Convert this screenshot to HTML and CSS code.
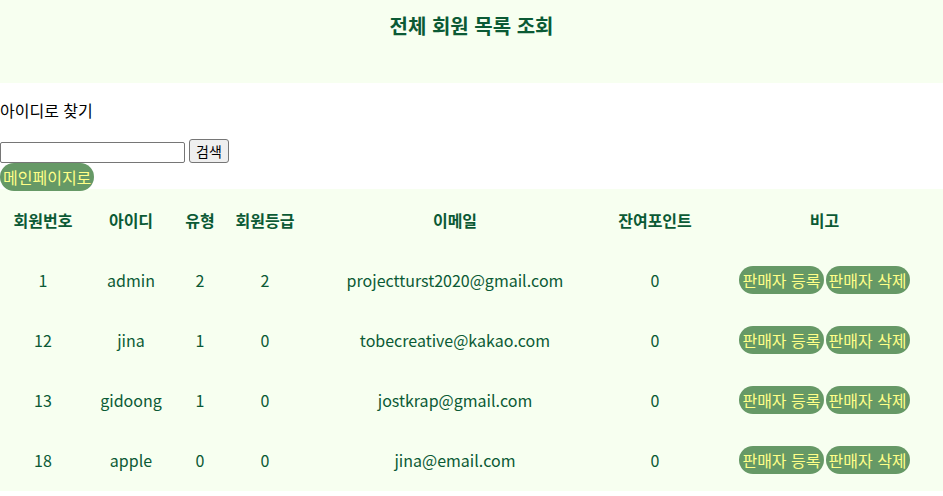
FILE: index.html
```html
<!DOCTYPE html>
<html lang="ko">
<head>
<meta charset="utf-8">
<title>전체 회원 목록 조회</title>
<link rel="stylesheet" href="styles.css">
</head>
<body>
<header class="top">
  <h2 class="title">전체 회원 목록 조회</h2>
</header>
<p class="label">아이디로 찾기</p>
<form class="search">
  <input class="search-input" type="text">
  <button class="search-btn" type="button">검색</button>
</form>
<div class="nav"><a class="pill" href="#">메인페이지로</a></div>
<table class="members">
  <thead>
    <tr><th class="c1">회원번호</th><th class="c2">아이디</th><th class="c3">유형</th><th class="c4">회원등급</th><th class="c5">이메일</th><th class="c6">잔여포인트</th><th class="c7">비고</th></tr>
  </thead>
  <tbody>
    <tr><td>1</td><td>admin</td><td>2</td><td>2</td><td>projectturst2020@gmail.com</td><td>0</td><td><div class="acts"><a class="pill" href="#">판매자 등록</a><a class="pill" href="#">판매자 삭제</a></div></td></tr>
    <tr><td>12</td><td>jina</td><td>1</td><td>0</td><td>tobecreative@kakao.com</td><td>0</td><td><div class="acts"><a class="pill" href="#">판매자 등록</a><a class="pill" href="#">판매자 삭제</a></div></td></tr>
    <tr><td>13</td><td>gidoong</td><td>1</td><td>0</td><td>jostkrap@gmail.com</td><td>0</td><td><div class="acts"><a class="pill" href="#">판매자 등록</a><a class="pill" href="#">판매자 삭제</a></div></td></tr>
    <tr><td>18</td><td>apple</td><td>0</td><td>0</td><td>jina@email.com</td><td>0</td><td><div class="acts"><a class="pill" href="#">판매자 등록</a><a class="pill" href="#">판매자 삭제</a></div></td></tr>
  </tbody>
</table>
</body>
</html>
```
FILE: styles.css
```css
html, body {
  margin: 0;
  padding: 0;
  background: #ffffff;
  font-family: "Noto Sans CJK KR", "Noto Sans", sans-serif;
  font-size: 16px;
  color: #000;
}
.top {
  background: #f7fff0;
  height: 83px;
  box-sizing: border-box;
  padding-top: 11px;
}
.title {
  margin: 0;
  text-align: center;
  font-size: 20px;
  font-weight: 700;
  color: #0b5a35;
  line-height: 29px;
}
.label {
  margin: 16px 0 19px 0;
  line-height: 23px;
}
.search {
  display: flex;
  align-items: flex-end;
  gap: 4px;
  margin: 0;
  height: 22px;
}
.search-input {
  width: 185px;
  height: 21px;
  box-sizing: border-box;
  margin: 0;
  border: 1px solid #767676;
  border-radius: 2px;
  padding: 1px 2px;
}
.search-btn {
  height: 24px;
  margin: 0;
  padding: 0 6px;
  font-family: "Noto Sans CJK KR", sans-serif;
  font-size: 14px;
  background: #efefef;
  border: 1px solid #767676;
  border-radius: 3px;
  color: #000;
}
.nav {
  position: relative;
  height: 26px;
}
.pill {
  display: inline-block;
  background: #669966;
  color: #ffff88;
  text-decoration: none;
  border-radius: 14px;
  padding: 2px 3px;
  line-height: 24px;
  font-size: 16px;
}
.members {
  width: 943px;
  background: #f7fff0;
  border-spacing: 2px;
  color: #0b5a35;
}
.members th, .members td {
  height: 56px;
  padding: 1px;
  text-align: center;
  vertical-align: middle;
}
.members th { font-weight: 700; }
.c1 { width: 80px; }
.c2 { width: 88px; }
.c3 { width: 42px; }
.c4 { width: 80px; }
.c5 { width: 292px; }
.c6 { width: 100px; }
.acts {
  display: flex;
  justify-content: center;
  gap: 2px;
}
```
